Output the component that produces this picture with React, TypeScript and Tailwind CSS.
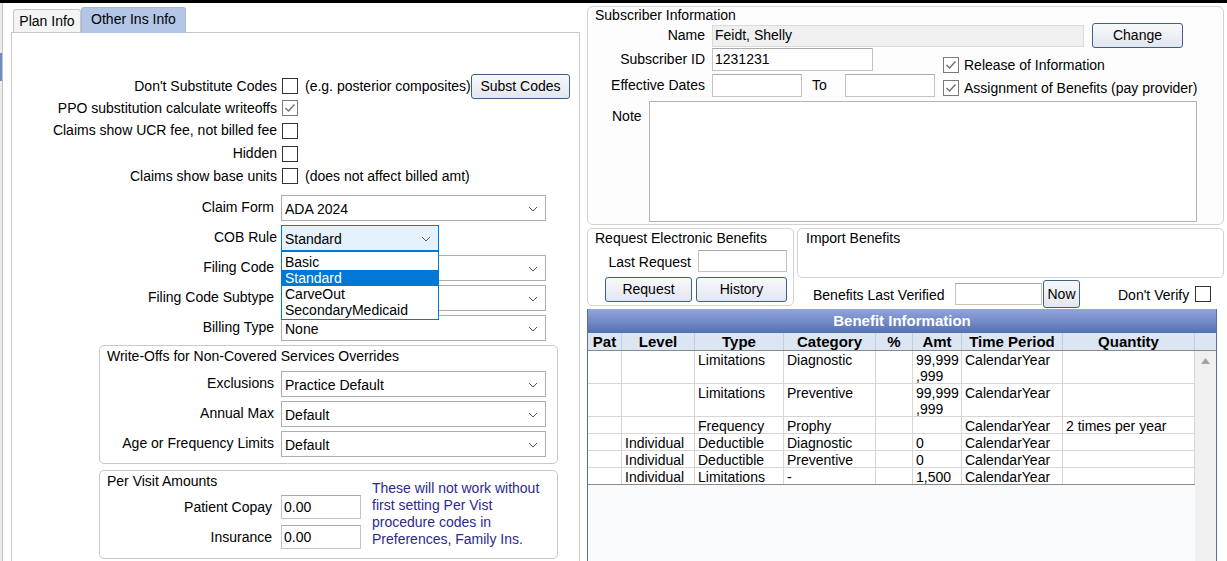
import React from 'react';

const FONT = "font-['Liberation_Sans',Arial,sans-serif]";

function CheckBox({ checked = false }: { checked?: boolean }) {
  return (
    <span
      className={`flex h-[16px] w-[16px] shrink-0 items-center justify-center border bg-white ${
        checked ? 'border-[#7a7a7a]' : 'border-[#333333]'
      }`}
    >
      {checked && (
        <svg width="12" height="10" viewBox="0 0 12 10">
          <polyline points="1.5,5 4.5,8 10.5,1.5" fill="none" stroke="#707070" strokeWidth="1.4" />
        </svg>
      )}
    </span>
  );
}

function Chevron() {
  return (
    <svg width="10" height="6" viewBox="0 0 10 6" className="ml-auto mr-[7px] shrink-0">
      <polyline points="1,1 5,5 9,1" fill="none" stroke="#555555" strokeWidth="1" />
    </svg>
  );
}

function Select({ value, width = 'w-[265px]' }: { value: string; width?: string }) {
  return (
    <div className={`flex h-[26px] ${width} items-center border border-[#adadad] bg-white pl-[3px] pt-[2px]`}>
      <span className="whitespace-nowrap">{value}</span>
      <Chevron />
    </div>
  );
}

function Btn({ children, className = '' }: { children: React.ReactNode; className?: string }) {
  return (
    <button
      className={`flex items-center justify-center rounded-[3px] border border-[#3e5f86] bg-gradient-to-b from-[#f7f8fa] to-[#e2e7ee] text-[14px] text-black ${className}`}
    >
      {children}
    </button>
  );
}

function Input({ value = '', className = '' }: { value?: string; className?: string }) {
  return (
    <div className={`flex items-center border border-[#c3c3c3] border-t-[#a9a9a9] bg-white pl-[2px] ${className}`}>
      {value}
    </div>
  );
}

function CheckRow({ label, h, checked, children }: { label: string; h: string; checked?: boolean; children?: React.ReactNode }) {
  return (
    <div className={`flex ${h} items-center`}>
      <span className="w-[265px] whitespace-nowrap text-right">{label}</span>
      <span className="ml-[5px]">
        <CheckBox checked={checked} />
      </span>
      {children}
    </div>
  );
}

function SelectRow({ label, value, labelW = 'w-[262px]', width }: { label: string; value: string; labelW?: string; width?: string }) {
  return (
    <div className="flex h-[26px] items-center">
      <span className={`${labelW} whitespace-nowrap pb-[2px] text-right`}>{label}</span>
      <span className="ml-[7px]">
        <Select value={value} width={width} />
      </span>
    </div>
  );
}

function LeftPanel() {
  return (
    <div className="flex w-[569px] flex-col">
      {/* tabs */}
      <div className="flex h-[29px] items-end pl-[2px]">
        <div className="flex h-[23px] w-[68px] items-center justify-center rounded-t-[3px] border border-b-0 border-[#c6c6c6] bg-[#f4f4f4]">
          Plan Info
        </div>
        <div className="relative z-10 -mb-px flex h-[26px] w-[105px] items-center justify-center rounded-t-[3px] border border-b-0 border-[#a9b9d9] bg-[#b4c6e8] pb-[2px]">
          Other Ins Info
        </div>
      </div>
      <div className="flex flex-1 flex-col border border-b-0 border-[#c6c6c6] pt-[42px]">
        <CheckRow label="Don't Substitute Codes" h="h-[22px]">
          <span className="ml-[7px] w-[166px] whitespace-nowrap">(e.g. posterior composites)</span>
          <Btn className="-my-[2px] h-[25px] w-[99px]">Subst Codes</Btn>
        </CheckRow>
        <CheckRow label="PPO substitution calculate writeoffs" h="h-[22px]" checked />
        <CheckRow label="Claims show UCR fee, not billed fee" h="h-[23px]" />
        <CheckRow label="Hidden" h="h-[23px]" />
        <CheckRow label="Claims show base units" h="h-[22px]">
          <span className="ml-[7px] whitespace-nowrap">(does not affect billed amt)</span>
        </CheckRow>

        <div className="mt-[8px] flex flex-col gap-[4px]">
          <SelectRow label="Claim Form" value="ADA 2024" />
          <div className="flex h-[26px] items-center">
            <span className="w-[266px] whitespace-nowrap pb-[2px] pr-[1px] text-right">COB Rule</span>
            <div className="relative ml-[3px]">
              <div className="flex h-[26px] w-[158px] items-center border border-[#0078d7] bg-[#e5f1fb] pl-[3px] pt-[2px]">
                <span>Standard</span>
                <Chevron />
              </div>
              <div className="absolute left-0 top-full z-20 w-[158px] border border-[#0078d7] bg-white pb-[1px] pt-[2px]">
                <div className="flex h-[16px] items-center pl-[3px]">Basic</div>
                <div className="flex h-[16px] items-center bg-[#0078d7] pl-[3px] text-white">Standard</div>
                <div className="flex h-[16px] items-center pl-[3px]">CarveOut</div>
                <div className="flex h-[16px] items-center pl-[3px]">SecondaryMedicaid</div>
              </div>
            </div>
          </div>
          <SelectRow label="Filing Code" value="" />
          <SelectRow label="Filing Code Subtype" value="" />
          <SelectRow label="Billing Type" value="None" />
        </div>

        <div className="ml-[87px] mt-[4px] flex w-[459px] flex-col rounded-[5px] border border-[#c8c8c8] pb-[6px] pt-[2px]">
          <div className="pl-[7px] leading-[16px]">Write-Offs for Non-Covered Services Overrides</div>
          <div className="mt-[7px] flex flex-col gap-[4px]">
            <SelectRow label="Exclusions" value="Practice Default" labelW="w-[174px]" />
            <SelectRow label="Annual Max" value="Default" labelW="w-[174px]" />
            <SelectRow label="Age or Frequency Limits" value="Default" labelW="w-[174px]" />
          </div>
        </div>

        <div className="ml-[87px] mt-[6px] flex h-[89px] w-[459px] rounded-[5px] border border-[#c8c8c8]">
          <div className="flex w-[272px] flex-col pt-[2px]">
            <div className="pl-[7px] leading-[16px]">Per Visit Amounts</div>
            <div className="mt-[6px] flex h-[24px] items-center">
              <span className="w-[172px] text-right">Patient Copay</span>
              <Input value="0.00" className="ml-[9px] h-[24px] w-[80px]" />
            </div>
            <div className="mt-[6px] flex h-[24px] items-center">
              <span className="w-[172px] text-right">Insurance</span>
              <Input value="0.00" className="ml-[9px] h-[24px] w-[80px]" />
            </div>
          </div>
          <div className="w-[176px] pt-[9px] leading-[17px] text-[#2c2a8c]">
            These will not work without first setting Per Vist procedure codes in Preferences, Family Ins.
          </div>
        </div>
      </div>
    </div>
  );
}

const COLS = [
  { name: 'Pat', w: 'w-[34px]' },
  { name: 'Level', w: 'w-[73px]' },
  { name: 'Type', w: 'w-[89px]' },
  { name: 'Category', w: 'w-[92px]' },
  { name: '%', w: 'w-[37px]' },
  { name: 'Amt', w: 'w-[49px]' },
  { name: 'Time Period', w: 'w-[101px]' },
  { name: 'Quantity', w: 'w-[132px]' },
];

const ROWS: { h: string; cells: React.ReactNode[] }[] = [
  { h: 'h-[33px]', cells: ['', '', 'Limitations', 'Diagnostic', '', <>99,999<br />,999</>, 'CalendarYear', ''] },
  { h: 'h-[33px]', cells: ['', '', 'Limitations', 'Preventive', '', <>99,999<br />,999</>, 'CalendarYear', ''] },
  { h: 'h-[17px]', cells: ['', '', 'Frequency', 'Prophy', '', '', 'CalendarYear', '2 times per year'] },
  { h: 'h-[17px]', cells: ['', 'Individual', 'Deductible', 'Diagnostic', '', '0', 'CalendarYear', ''] },
  { h: 'h-[17px]', cells: ['', 'Individual', 'Deductible', 'Preventive', '', '0', 'CalendarYear', ''] },
  { h: 'h-[17px]', cells: ['', 'Individual', 'Limitations', '-', '', '1,500', 'CalendarYear', ''] },
];

function BenefitGrid() {
  return (
    <div className="mt-[1px] flex w-[630px] flex-1 flex-col border-x border-[#5670a6] bg-[#f9fbfd]">
      <div className="flex h-[24px] items-center justify-center bg-gradient-to-b from-[#92a6da] to-[#5670b2] text-[15px] font-bold text-white">
        Benefit Information
      </div>
      <div className="flex h-[18px] border-b border-[#8a8a8a] bg-[#dce6f3]">
        {COLS.map((c) => (
          <div
            key={c.name}
            className={`${c.w} flex items-center justify-center border-r border-[#c3cfe0] text-[15px] font-bold leading-[16px]`}
          >
            {c.name}
          </div>
        ))}
        <div className="flex-1" />
      </div>
      <div className="flex flex-1">
        <div className="flex w-[607px] flex-col self-start bg-white text-[14px] leading-[16px]">
          {ROWS.map((r, i) => (
            <div
              key={i}
              className={`flex ${r.h} border-b ${i === ROWS.length - 1 ? 'border-[#8a8a8a]' : 'border-[#d6d6d6]'}`}
            >
              {r.cells.map((cell, j) => (
                <div key={j} className={`${COLS[j].w} whitespace-nowrap border-r border-[#d6d6d6] pl-[3px] pt-[1px]`}>
                  {cell}
                </div>
              ))}
            </div>
          ))}
        </div>
        <div className="ml-auto flex w-[21px] justify-center bg-[#f0f0f0] pt-[7px]">
          <svg width="9" height="6" viewBox="0 0 9 6">
            <polygon points="4.5,0 9,6 0,6" fill="#a3a3a3" />
          </svg>
        </div>
      </div>
    </div>
  );
}

function RightPanel() {
  return (
    <div className="flex w-[637px] flex-col">
      <div className="mt-[3px] flex h-[219px] flex-col rounded-[6px] border border-[#d2d2d2] bg-[#fdfdfe] pt-[1px]">
        <div className="h-[15px] pl-[7px] leading-[15px]">Subscriber Information</div>
        <div className="flex h-[25px] items-center">
          <span className="w-[117px] text-right">Name</span>
          <div className="ml-[7px] flex h-[22px] w-[372px] items-center border border-[#dadada] bg-[#f0f0f0] pl-[2px]">
            Feidt, Shelly
          </div>
          <Btn className="ml-[8px] h-[25px] w-[91px]">Change</Btn>
        </div>
        <div className="flex">
          <div className="flex w-[347px] flex-col gap-[3px]">
            <div className="flex h-[23px] items-center">
              <span className="w-[117px] text-right">Subscriber ID</span>
              <Input value="1231231" className="ml-[7px] h-[23px] w-[161px]" />
            </div>
            <div className="flex h-[23px] items-center">
              <span className="w-[117px] text-right">Effective Dates</span>
              <Input className="ml-[7px] h-[23px] w-[90px]" />
              <span className="w-[43px] pl-[10px]">To</span>
              <Input className="h-[23px] w-[90px]" />
            </div>
          </div>
          <div className="ml-[8px] flex flex-col gap-[7px] pt-[9px]">
            <div className="flex h-[16px] items-center">
              <CheckBox checked />
              <span className="ml-[5px] whitespace-nowrap">Release of Information</span>
            </div>
            <div className="flex h-[16px] items-center">
              <CheckBox checked />
              <span className="ml-[5px] whitespace-nowrap">Assignment of Benefits (pay provider)</span>
            </div>
          </div>
        </div>
        <div className="mt-[4px] flex pl-[24px]">
          <span className="pt-[5px]">Note</span>
          <div className="ml-[7px] h-[121px] w-[548px] border border-[#b4b4b4] bg-white" />
        </div>
      </div>

      <div className="mt-[3px] flex">
        <div className="flex h-[78px] w-[207px] flex-col rounded-[5px] border border-[#d2d2d2] pt-[1px]">
          <div className="pl-[7px] leading-[16px]">Request Electronic Benefits</div>
          <div className="mt-[4px] flex h-[22px] items-center">
            <span className="w-[103px] pt-[3px] text-right">Last Request</span>
            <Input className="ml-[7px] h-[22px] w-[89px]" />
          </div>
          <div className="mt-[5px] flex pl-[17px]">
            <Btn className="h-[25px] w-[87px]">Request</Btn>
            <Btn className="ml-[4px] h-[25px] w-[91px]">History</Btn>
          </div>
        </div>
        <div className="ml-[3px] flex w-[427px] flex-col">
          <div className="h-[50px] rounded-[5px] border border-[#d2d2d2] pl-[8px] pt-[1px] leading-[16px]">Import Benefits</div>
          <div className="mt-[2px] flex h-[28px] items-center pl-[16px]">
            <span className="w-[142px] whitespace-nowrap pt-[2px]">Benefits Last Verified</span>
            <Input className="h-[22px] w-[87px]" />
            <Btn className="ml-[1px] h-[28px] w-[37px]">Now</Btn>
            <span className="ml-[38px] whitespace-nowrap pt-[2px]">Don't Verify</span>
            <span className="ml-[6px]">
              <CheckBox />
            </span>
          </div>
        </div>
      </div>

      <BenefitGrid />
    </div>
  );
}

export default function App() {
  return (
    <div className={`${FONT} flex h-[561px] w-[1227px] flex-col overflow-hidden bg-white text-[14px] text-black`}>
      <div className="h-[3px] shrink-0 bg-black" />
      <div className="flex flex-1">
        <div className="flex w-[11px] shrink-0">
          <div className="w-[3px] border-r border-[#c4c4c4] bg-[#ececec]">
            <div className="mt-[50px] h-[28px] bg-[#6d8cc2]" />
          </div>
        </div>
        <LeftPanel />
        <div className="w-[7px] shrink-0" />
        <RightPanel />
      </div>
    </div>
  );
}
